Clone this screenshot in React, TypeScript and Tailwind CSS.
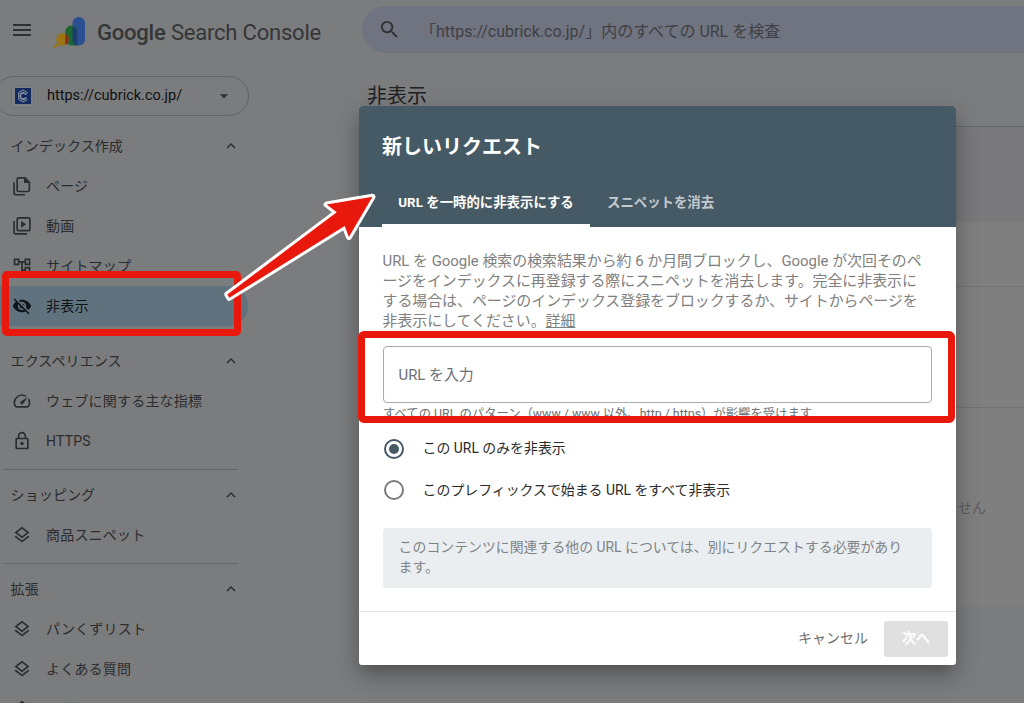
import type { ComponentType } from "react";
import {
  MdArrowDropDown,
  MdExpandLess,
  MdLockOutline,
  MdMenu,
  MdOutlineAccountTree,
  MdOutlineLayers,
  MdSearch,
  MdSpeed,
  MdVisibilityOff,
} from "react-icons/md";

type IconProps = { className?: string };

const PagesIcon = ({ className }: IconProps) => (
  <svg className={className} viewBox="0 0 24 24" fill="none" stroke="currentColor" strokeWidth="2">
    <path d="M8 2.2h7.5l5.3 5.3v9.3a1.8 1.8 0 0 1-1.8 1.8H8a1.8 1.8 0 0 1-1.8-1.8V4A1.8 1.8 0 0 1 8 2.2z" />
    <path d="M14.5 2v6.5H21z" fill="currentColor" stroke="none" />
    <path d="M2.5 7.5v13a2 2 0 0 0 2 2h11" />
  </svg>
);

const VideosIcon = ({ className }: IconProps) => (
  <svg className={className} viewBox="0 0 24 24" fill="none" stroke="currentColor" strokeWidth="2">
    <rect x="6.2" y="2.3" width="15.3" height="15.3" rx="1.5" />
    <path d="M10.8 6v8l6.2-4z" fill="currentColor" stroke="none" />
    <path d="M2.5 6v13.7a1.8 1.8 0 0 0 1.8 1.8H18" />
  </svg>
);

const NavHeading = ({ label }: { label: string }) => (
  <div className="-mr-[2px] flex h-10 shrink-0 items-center justify-between pl-[10.6px] text-[14px] tracking-[0.1px] text-[#2b2c2e]">
    <span>{label}</span>
    <MdExpandLess className="size-[18px] text-[#2b2c2e]" />
  </div>
);

type NavItemProps = { icon: ComponentType<IconProps>; label: string; active?: boolean };

const NavItem = ({ icon: Icon, label, active }: NavItemProps) => (
  <div
    className={`flex h-10 shrink-0 items-center gap-[14px] pl-[12px] text-[14px] tracking-[0.2px] ${
      active ? "-mr-[10px] rounded-r-full bg-[#60727e] text-[#0f1417]" : "text-[#2b2c2e]"
    }`}
  >
    <Icon className="size-[20px]" />
    <span className="whitespace-nowrap">{label}</span>
  </div>
);

const Divider = () => <div className="ml-[3px] mt-[8px] mb-[5px] h-px shrink-0 bg-[#656668]" />;

const Logo = () => (
  <svg className="h-[33px] w-[34px]" viewBox="0 0 34 33">
    <rect x="19.5" y="1" width="12.5" height="28.5" rx="6" fill="#2b4f91" />
    <path d="M25.5 29.5h-7.2a6 6 0 0 1-6-6v-8a6 6 0 0 1 12 0v14z" fill="#1c6732" />
    <path d="M19.5 10.8a6 6 0 0 1 4.8 5.7v13a5.5 5.5 0 0 1-4.8-5.5z" fill="#1d3c70" />
    <circle cx="9.5" cy="23.5" r="6.2" fill="#9b7413" />
    <path d="M12.3 18a6.2 6.2 0 0 1 0 11z" fill="#8c2b24" />
    <path d="M5.5 27.5 2 31" stroke="#9b7413" strokeWidth="2.4" strokeLinecap="round" />
  </svg>
);

const Favicon = () => (
  <svg className="size-[16px]" viewBox="0 0 16 16" fill="none" stroke="#8c93a5">
    <rect width="16" height="16" fill="#152a5f" stroke="none" />
    <path d="M12.3 5.6V4.4L8 2 3.7 4.4v7.2L8 14l4.3-2.4" strokeWidth="1" />
    <path d="M11.4 6.4 8 4.6 5.4 6.2v3.7L8 11.5l3.4-1.8" strokeWidth="1.6" />
  </svg>
);

const Sidebar = () => (
  <aside className="flex w-[359px] shrink-0 flex-col">
    <div className="flex h-[64px] shrink-0 items-center pl-[10px]">
      <MdMenu className="mb-[4px] size-[24px] text-[#2f3032]" />
      <div className="ml-[19px]">
        <Logo />
      </div>
      <div className="ml-[10px] mt-[2px] whitespace-nowrap text-[22px] leading-none tracking-[-0.2px] text-[#353638]">
        <span className="font-medium">Google</span> Search Console
      </div>
    </div>
    <div className="-ml-[6px] mt-[12px] flex h-[40px] w-[255px] shrink-0 items-center rounded-full border border-[#646567] pl-[16px] pr-[14px]">
      <div className="flex size-[23px] items-center justify-center rounded-[2px] border border-[#737476] bg-[#7f8082]">
        <Favicon />
      </div>
      <span className="ml-[13px] text-[14.5px] text-[#101011]">https://cubrick.co.jp/</span>
      <MdArrowDropDown className="ml-auto size-[20px] text-[#303133]" />
    </div>
    <nav className="mt-[10px] flex w-[238px] flex-col">
      <NavHeading label="インデックス作成" />
      <NavItem icon={PagesIcon} label="ページ" />
      <NavItem icon={VideosIcon} label="動画" />
      <NavItem icon={MdOutlineAccountTree} label="サイトマップ" />
      <NavItem icon={MdVisibilityOff} label="非表示" active />
      <div className="h-[15px] shrink-0" />
      <NavHeading label="エクスペリエンス" />
      <NavItem icon={MdSpeed} label="ウェブに関する主な指標" />
      <NavItem icon={MdLockOutline} label="HTTPS" />
      <Divider />
      <NavHeading label="ショッピング" />
      <NavItem icon={MdOutlineLayers} label="商品スニペット" />
      <Divider />
      <NavHeading label="拡張" />
      <NavItem icon={MdOutlineLayers} label="パンくずリスト" />
      <NavItem icon={MdOutlineLayers} label="よくある質問" />
      <NavItem icon={MdOutlineLayers} label="レビュー" />
    </nav>
  </aside>
);

const RemovalsPage = () => (
  <main className="flex flex-1 flex-col">
    <div className="ml-[3px] mt-[6px] flex h-[47px] shrink-0 items-center rounded-l-full bg-[#707480] pl-[16px] text-[#303133]">
      <MdSearch className="size-[23px]" />
      <span className="ml-[19px] mt-[5px] whitespace-nowrap text-[16px] text-[#3e4044]">
        「https://cubrick.co.jp/」内のすべての URL を検査
      </span>
    </div>
    <h1 className="flex h-[74px] shrink-0 items-center border-b border-[#656668] pt-[12px] pl-[8px] text-[20px] text-[#202123]">
      非表示
    </h1>
    <div className="h-[95px] shrink-0 bg-[#79797b]" />
    <div className="h-[65px] shrink-0 border-b border-[#727272] bg-[#7f7f7f]" />
    <div className="h-[121px] shrink-0 border-b border-[#727272] bg-[#7f7f7f]" />
    <div className="flex h-[198px] shrink-0 items-center justify-end bg-[#7f7f7f] pt-[3px] pr-[38px] text-[14px] text-[#5c5c5c]">
      ません
    </div>
  </main>
);

const RequestDialog = () => (
  <div className="absolute left-[359px] top-[106px] flex h-[559px] w-[597px] flex-col overflow-hidden rounded-[3px] bg-white">
    <div className="flex h-[121px] shrink-0 flex-col justify-between bg-[#465a65] pl-[23px] text-white">
      <h2 className="mt-[26px] text-[20px] font-bold leading-[30px]">新しいリクエスト</h2>
      <div className="flex h-[49px] text-[13.4px] font-bold">
        <div className="flex w-[208px] items-center justify-center whitespace-nowrap border-b-[3px] border-white pt-[4px]">
          URL を一時的に非表示にする
        </div>
        <div className="flex items-center border-b-[3px] border-transparent pt-[4px] pl-[17px] text-[#c3cacd]">
          スニペットを消去
        </div>
      </div>
    </div>
    <div className="flex flex-1 flex-col px-[24px]">
      <p className="-ml-[0.5px] mt-[24px] whitespace-nowrap text-[14.92px] leading-[20px] text-[#808080]">
        URL を Google 検索の検索結果から約 6 か月間ブロックし、Google が次回そのペ
        <br />
        ージをインデックスに再登録する際にスニペットを消去します。完全に非表示に
        <br />
        する場合は、ページのインデックス登録をブロックするか、サイトからページを
        <br />
        非表示にしてください。<span className="underline">詳細</span>
      </p>
      <div className="mt-[15px] flex h-[57px] items-center rounded-[4px] border border-[#a9abae] pt-[2px] pl-[14.5px] text-[14.9px] text-[#6c7075]">
        URL を入力
      </div>
      <div className="mt-[2px] h-[18px] whitespace-nowrap text-[12.35px] leading-[18px] text-[#6c7075]">
        すべての URL のパターン（www / www 以外、http / https）が影響を受けます
      </div>
      <div className="mt-[15px] flex h-[22px] items-center gap-[18.6px] text-[13.9px] text-[#2b2b2b]">
        <span className="ml-px flex size-[20px] items-center justify-center rounded-full border-2 border-[#465a65]">
          <span className="size-[10px] rounded-full bg-[#465a65]" />
        </span>
        <span className="mb-px">この URL のみを非表示</span>
      </div>
      <div className="mt-[19px] flex h-[22px] items-center gap-[18.6px] text-[13.9px] text-[#2b2b2b]">
        <span className="ml-px size-[20px] rounded-full border-2 border-[#7b7b7b]" />
        このプレフィックスで始まる URL をすべて非表示
      </div>
      <div className="mt-[27px] h-[60px] whitespace-nowrap rounded-[4px] bg-[#eaeef1] pt-[9px] pl-[15.6px] text-[13.9px] leading-[20px] text-[#808386]">
        このコンテンツに関連する他の URL については、別にリクエストする必要があり
        <br />
        ます。
      </div>
    </div>
    <div className="flex h-[54px] shrink-0 items-center justify-end gap-[16px] border-t border-[#e4e4e4] pr-[8px] text-[14px]">
      <button className="text-[#6f6f6f]">キャンセル</button>
      <button className="h-[36px] w-[64px] rounded-[3px] bg-[#e0e0e0] font-bold text-white">次へ</button>
    </div>
  </div>
);

// Red frames and the arrow that point from the menu item to the dialog
const Annotations = () => (
  <>
    <div className="absolute left-[2px] top-[271px] h-[65px] w-[239px] rounded-[5px] border-[7px] border-[#e8190c]" />
    <div className="absolute left-[358px] top-[331px] h-[92px] w-[597px] rounded-[6px] border-[7px] border-[#e8190c]" />
    <svg className="absolute left-[210px] top-[170px] h-[150px] w-[190px]" viewBox="210 170 190 150">
      <path
        d="M227.3 294.5 336.7 212.3 326.7 204.5 372.5 196.7 348.9 237 344.7 226 229.3 297.8Z"
        fill="#e8190c"
        stroke="#fff"
        strokeWidth="6"
        strokeLinejoin="round"
        paintOrder="stroke"
      />
    </svg>
  </>
);

export default function App() {
  return (
    <div className="relative flex h-[703px] w-[1024px] overflow-hidden bg-[#7b7c7e] font-[Roboto,'Noto_Sans_CJK_JP',sans-serif]">
      <Sidebar />
      <RemovalsPage />
      <div className="absolute left-[359px] top-[106px] h-[559px] w-[597px] rounded-[3px] shadow-[0_10px_14px_-6px_rgba(0,0,0,0.2),0_12px_22px_2px_rgba(0,0,0,0.14),0_6px_24px_4px_rgba(0,0,0,0.08)]" />
      <RequestDialog />
      <Annotations />
    </div>
  );
}
